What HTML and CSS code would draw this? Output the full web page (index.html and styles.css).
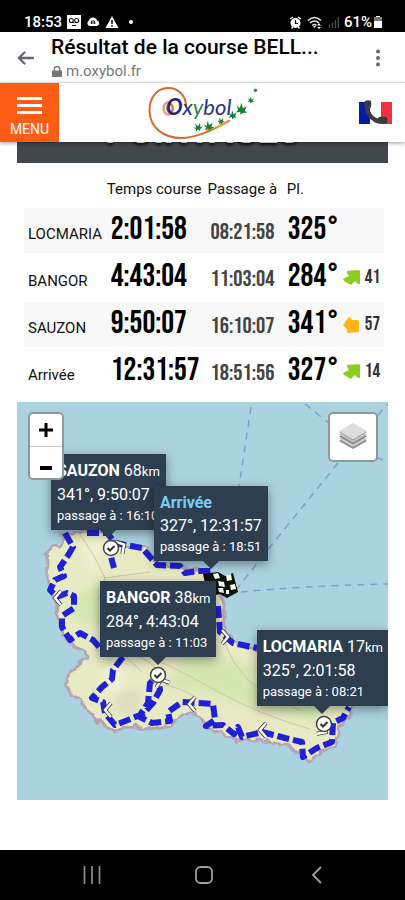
FILE: index.html
```html
<!DOCTYPE html>
<html lang="fr">
<head>
<meta charset="utf-8">
<meta name="viewport" content="width=device-width, initial-scale=1">
<title>Résultat de la course</title>
<link rel="stylesheet" href="styles.css">
</head>
<body>
<div class="status">
  <span>18:53</span>
  <svg width="14" height="14" viewBox="0 0 14 14"><rect width="14" height="14" fill="#fff"/><g fill="none" stroke="#111" stroke-width="1.1"><circle cx="4.300" cy="5.500" r="2"/><circle cx="9.700" cy="5.500" r="2"/><path d="M4.300 7.500h3M5 10.500h4"/></g></svg>
  <svg width="14" height="12" viewBox="0 0 14 12"><path d="M3.500 10A3 3 0 0 1 3 4.500A4.200 4.200 0 0 1 11 4.500A2.800 2.800 0 0 1 11 10z" fill="#fff"/><path d="M5.500 8V5h3v3M4.500 7h5" stroke="#222" fill="none"/></svg>
  <svg width="14" height="12" viewBox="0 0 14 12"><path d="M7 0l6.500 12H.5z" fill="#fff"/><path d="M7 4v4M7 9v1.500" stroke="#000" stroke-width="1.5"/></svg>
  <span class="dot"></span>
  <span class="grow"></span>
  <svg width="13" height="13" viewBox="0 0 13 13"><circle cx="6.500" cy="7" r="5" fill="#fff"/><path d="M1 3l3-2M12 3L9 1M2.500 12.500l1.500-2M10.500 12.500L9 10.500" stroke="#fff" stroke-width="1.400"/><path d="M6.500 4v3.500H9" stroke="#000" stroke-width="1.200" fill="none"/></svg>
  <svg width="16" height="13" viewBox="0 0 16 13"><g fill="none" stroke="#ddd" stroke-width="1.600"><path d="M1 4.500Q7.500-1.500 14 4.500M3 7Q7.500 3 12 7M5.300 9.500Q7.500 7.500 9.500 9.500"/></g><path d="M6 10h3l-1.500 2zM12 7l2 2.500h-4zM12 13l-2-2h4z" fill="#fff"/></svg>
  <svg width="11" height="12" viewBox="0 0 11 12"><path d="M1.500 12V9M4.500 12V6.500M7.500 12V4M10.300 12V1" stroke="#4d4d4d" stroke-width="1.300"/></svg>
  <span class="battery">61%<svg width="8" height="12" viewBox="0 0 8 12"><path d="M2 0h4v1h2v11H0V1h2z" fill="#fff"/><path d="M0 1h8v4H0z" fill="#777"/></svg></span>
</div>
<div class="browser">
  <button class="plain" aria-label="Retour"><svg width="17" height="14" viewBox="0 0 17 14"><path d="M16 7H2M7.500 1.500L1.800 7l5.700 5.500" fill="none" stroke="#646674" stroke-width="2.300" stroke-linecap="round" stroke-linejoin="round"/></svg></button>
  <div class="page-id">
    <div class="page-title">Résultat de la course BELL...</div>
    <div class="page-url"><svg width="10" height="11" viewBox="0 0 10 11"><path d="M0 4.500h10V11H0z" fill="#777"/><path d="M2.300 5V3.200a2.700 2.700 0 0 1 5.400 0V5" fill="none" stroke="#777" stroke-width="1.400"/></svg>m.oxybol.fr</div>
  </div>
  <button class="plain" aria-label="Options"><svg width="6" height="18" viewBox="0 0 6 18" fill="#646674"><circle cx="3" cy="2.500" r="2"/><circle cx="3" cy="9" r="2"/><circle cx="3" cy="15.500" r="2"/></svg></button>
</div>
<header class="site">
  <button class="menu"><span class="bars"><i></i><i></i><i></i></span>MENU</button>
  <a class="logo" href="#">
    <svg width="112" height="56" viewBox="147 84 112 56">
      <g fill="none" stroke="#d9692f" stroke-linecap="round"><path d="M186 105C186 94 177 86 167 87C156 88 149 98 149.500 110C150 126 163 138 184 137C202 135 216 127 229 120" stroke-width="2"/><ellipse cx="168" cy="107.500" rx="4.500" ry="6" stroke-width="2.500" stroke="#e9a083"/><ellipse cx="170" cy="107.500" rx="3" ry="4" stroke-width="1.500"/><path d="M207 129Q220 126 228 120" stroke="#e9a04b" stroke-width="2"/></g>
      <text class="logo-text" x="166" y="114"><tspan class="logo-o">O</tspan>x<tspan fill="#26824a">y</tspan>bol</text>
      <defs><path id="leaf" d="M0 6L-1 3L-5 5L-3.500 2L-6-2L-2.500 0L-2-6L.5-1L4-4L3 1L6 2L2 3.500z"/></defs>
      <g fill="#138236"><use href="#leaf" transform="translate(198 126) rotate(-20) scale(.75)"/><use href="#leaf" transform="translate(209 125) scale(.85)"/><use href="#leaf" transform="translate(221 120) rotate(-10) scale(.6)"/><use href="#leaf" transform="translate(233 114) rotate(10) scale(.75)"/><use href="#leaf" transform="translate(242 108) rotate(15)"/><use href="#leaf" transform="translate(251 99) rotate(15) scale(.55)"/><use href="#leaf" transform="translate(255.500 89) scale(.4)"/></g>
    </svg>
  </a>
  <a class="call" href="#" aria-label="Appeler"><svg width="33" height="25" viewBox="0 0 33 25"><path d="M0 2h11v22H0z" fill="#00209f"/><path d="M11 2h11v22H11z" fill="#fff"/><path d="M22 2h11v22H22z" fill="#f5303e"/><path d="M6 1Q9-.5 12 1Q12.500 4 12 7L10.500 9Q12 16 18.500 18.500L20 17Q24 16 28 17.500Q29 21 28 23.500Q22 25 16 22.500Q6 17 5.500 5z" fill="#3d3d40"/></svg></a>
</header>
<main>
  <h1 class="banner">POINTAGES</h1>
  <table class="splits">
    <thead><tr><th></th><th>Temps course</th><th>Passage à</th><th>Pl.</th><th></th></tr></thead>
    <tbody>
      <tr><td>LOCMARIA</td><td class="time">2:01:58</td><td class="clock">08:21:58</td><td class="place">325°</td><td></td></tr>
      <tr><td>BANGOR</td><td class="time">4:43:04</td><td class="clock">11:03:04</td><td class="place">284°</td><td class="gain"><div><svg class="arrow up" viewBox="0 0 17 16"><path d="M4 1L16 0L17 1V14L15 14L12 11L8 15L1 11L0 9L6 6L4 3z"/></svg>41</div></td></tr>
      <tr><td>SAUZON</td><td class="time">9:50:07</td><td class="clock">16:10:07</td><td class="place">341°</td><td class="gain"><div><svg class="arrow down" viewBox="0 0 17 16"><path d="M5 1L7 0L9 3L15 3L16 5V15L4 16V12L0 8z"/></svg>57</div></td></tr>
      <tr><td>Arrivée</td><td class="time">12:31:57</td><td class="clock">18:51:56</td><td class="place">327°</td><td class="gain"><div><svg class="arrow up" viewBox="0 0 17 16"><path d="M4 1L16 0L17 1V14L15 14L12 11L8 15L1 11L0 9L6 6L4 3z"/></svg>14</div></td></tr>
    </tbody>
  </table>
  <section class="map" aria-label="Carte du parcours">
    <svg class="chart" viewBox="17 402 371 398" preserveAspectRatio="xMidYMid slice">
      <defs>
        <filter id="soft" x="-20%" y="-20%" width="140%" height="140%"><feGaussianBlur stdDeviation="5"/></filter>
        <filter id="edge"><feTurbulence type="fractalNoise" baseFrequency=".12" numOctaves="2" seed="4"/><feDisplacementMap in="SourceGraphic" scale="8" xChannelSelector="R" yChannelSelector="G"/></filter>
        <path id="island" d="M62 535L82 531L104 532L120 544L146 549L160 564L186 568L207 570L219 582L224 607L224 632L238 644L264 652L302 662L352 692L352 714L340 726L335 745L316 755L308 762L300 753L284 745L258 740L238 740L222 734L206 727L196 714L182 714L170 726L150 730L135 726L116 731L104 726L94 716L86 710L80 699L72 694L66 685L70 674L80 664L88 656L84 650L70 645L62 632L57 616L58 604L50 592L47 578L48 563L46 552L54 546L62 545z"/>
        <clipPath id="land"><use href="#island"/></clipPath>
        <g id="check"><circle r="7.500" fill="#fff" stroke="#444" stroke-width="1.500"/><path d="M-3.500 0l2.500 2.500l4.500-4.500" fill="none" stroke="#333" stroke-width="2"/></g>
        <path id="chev" d="M3-6L-3 1L3 8" fill="none"/>
        <g id="chevs"><use href="#chev" x="58" y="597"/><use href="#chev" x="108" y="709"/><use href="#chev" x="192" y="703"/><use href="#chev" x="263" y="729"/><use href="#chev" transform="translate(163 682) rotate(70)"/><use href="#chev" transform="translate(225 638) rotate(180)"/><use href="#chev" transform="translate(122 547) rotate(150)"/><use href="#chev" transform="translate(323 731) rotate(220)"/></g>
      </defs>
      <path d="M17 402h371v398H17z" fill="#aad3df"/>
      <g fill="none" stroke="#7f9fd0" stroke-width="1.500" stroke-dasharray="7 6"><path d="M251 407L239 487M305 404L330 424M338 463L270 547L236 590M378 415L388 404M376 457L388 462M241 592Q300 586 388 584"/></g>
      <g filter="url(#edge)"><use href="#island" fill="#e8eac4" stroke="#b5a5b2" stroke-width="3"/></g>
      <g clip-path="url(#land)">
        <g filter="url(#soft)"><path d="M185 655Q250 655 325 705L315 722L245 705Q205 690 165 685zM70 600L105 580L110 630L75 620z" fill="#d4e6b0"/><path d="M85 545L105 538L90 575zM100 675L125 660L120 700zM245 680L278 665L284 680z" fill="#f3f1d8"/><path d="M120 690L142 690L138 712L112 710z" fill="#e0dcc0"/></g>
        <g fill="none" stroke="#c9c8ad"><path d="M80 535Q92 550 105 578L98 600M104 578L150 572M95 650Q145 650 158 672M145 655Q170 665 215 690T310 729M122 653L142 672M224 640Q240 690 300 710M165 685Q195 690 222 720"/></g>
      </g>
      <path class="route" d="M65 533L73 547L67 557L60 567L64 576L55 580L50 590L57 597L67 593L74 596L74 608L62 616L62 627L70 640L80 633L93 640L100 648"/>
      <path class="route" d="M123 657L113 670L112 679L102 687L92 698L103 702L105 713L115 725L128 720L140 715L148 703L150 683L158 675L160 690L153 703L140 717L152 723L170 721L168 712L182 702L213 704L215 720L206 726L223 725L234 734L238 727L242 737L262 732L285 738L302 742L303 757L317 748L332 742L333 723L343 718L349 707"/>
      <path class="route" d="M87 533L107 533L115 543L142 548L157 565L180 566L185 573L198 571L212 571M218 606L220 632L233 643L257 648M115 543L110 553L114 568"/>
      <use href="#chevs" stroke="#333" stroke-width="4"/>
      <use href="#chevs" stroke="#fff" stroke-width="2.500"/>
      <use href="#check" x="111" y="548"/><use href="#check" x="158" y="675"/><use href="#check" x="324" y="724"/>
      <g><path d="M203 574L218 572L225 576L233 573L238 592L227 598L220 594L208 597z" fill="#0b120c"/><path d="M213 574l5-1l2 5l-5 1zM226 575l5-1l1 6l-5 1zM218 581l6 1l1 5l-6-1zM230 585l5-1l1 5l-5 1zM218 588l5 0l1 5l-5-1zM226 590l3 0l0 4l-3 0z" fill="#f4fff0"/></g>
    </svg>
    <div class="tip sauzon"><b>SAUZON</b> 68<small>km</small><p>341°, 9:50:07</p><p class="pass">passage à : 16:10</p></div>
    <div class="tip arrivee"><b>Arrivée</b><p>327°, 12:31:57</p><p class="pass">passage à : 18:51</p></div>
    <div class="tip bangor"><b>BANGOR</b> 38<small>km</small><p>284°, 4:43:04</p><p class="pass">passage à : 11:03</p></div>
    <div class="tip locmaria"><b>LOCMARIA</b> 17<small>km</small><p>325°, 2:01:58</p><p class="pass">passage à : 08:21</p></div>
    <div class="zoom"><button aria-label="Zoom avant"><svg width="16" height="16" viewBox="0 0 16 16"><path d="M8 1v14M1 8h14" stroke="#000" stroke-width="3"/></svg></button><button aria-label="Zoom arrière"><svg width="16" height="16" viewBox="0 0 16 16"><path d="M2 13h12" stroke="#000" stroke-width="4"/></svg></button></div>
    <button class="layers" aria-label="Couches"><svg width="30" height="30" viewBox="0 0 30 30"><path d="M1 19l14 8l14-8l-3-2H4z" fill="#8b8b8b"/><path d="M1 17l14 8l14-8l-3-2H4z" fill="#ccc"/><path d="M1 14.500l14 8l14-8l-3-2H4z" fill="#888"/><path d="M1 12.500l14 8l14-8l-3-2H4z" fill="#c4c4c4"/><path d="M1 10l14 8.500L29 10L15 2z" fill="#999"/><path d="M1 9l14 8.500L29 9L15 1z" fill="#dedede"/></svg></button>
  </section>
</main>
<nav class="system">
  <button class="plain" aria-label="Applications récentes"><svg width="18" height="18" viewBox="0 0 18 18"><path d="M1.500 0v18M9 0v18M16.500 0v18" stroke="#8e8e8e" stroke-width="1.700"/></svg></button>
  <button class="plain" aria-label="Accueil"><svg width="18" height="18" viewBox="0 0 18 18"><rect x="1" y="1" width="16" height="16" rx="4.500" fill="none" stroke="#a0a0a0" stroke-width="1.800"/></svg></button>
  <button class="plain" aria-label="Retour système"><svg width="18" height="18" viewBox="0 0 18 18"><path d="M13 1L5 9l8 8" fill="none" stroke="#a0a0a0" stroke-width="1.800"/></svg></button>
</nav>
</body>
</html>
```
FILE: styles.css
```css
* { box-sizing: border-box; }
body {
  margin: 0;
  min-height: 100vh;
  display: flex;
  flex-direction: column;
  background: #fff;
  color: #111;
  font-family: Roboto, "Liberation Sans", sans-serif;
  font-size: 15px;
}
svg { display: block; flex: none; }
p { margin: 0; }
button { font-family: inherit; border: 0; cursor: pointer; }
.plain { background: none; padding: 0; display: flex; align-items: center; justify-content: center; }
.status {
  height: 32px;
  padding: 12px 23px 0 24px;
  display: flex;
  align-items: center;
  gap: 5px;
  background: #000;
  color: #fff;
  font-size: 15px;
  font-weight: 500;
  line-height: 20px;
}
.dot { width: 4px; height: 4px; margin-left: 5px; border-radius: 50%; background: #fff; }
.grow { flex: 1; }
.battery { display: flex; align-items: center; gap: 2px; }
.browser {
  height: 51px;
  padding: 2px 24px 0 17px;
  display: flex;
  align-items: center;
  gap: 17px;
  border-bottom: 1px solid #f0f0f2;
}
.page-id { flex: 1; min-width: 0; }
.page-title { color: #000; font-size: 21px; font-weight: 500; line-height: 26px; white-space: nowrap; }
.page-url { display: flex; align-items: center; gap: 4px; color: #777; font-size: 15px; line-height: 22px; padding-left: 1px; }
.site {
  position: relative;
  z-index: 2;
  height: 59px;
  padding-right: 13px;
  display: flex;
  align-items: center;
  background: #fff;
  box-shadow: 0 1px 4px rgba(0, 0, 0, .4);
}
.menu {
  width: 59px;
  height: 59px;
  padding: 14px 0 0;
  display: flex;
  flex-direction: column;
  align-items: center;
  gap: 7px;
  background: #fb5c16;
  color: #fff;
  font-size: 14px;
  line-height: 16px;
}
.logo { flex: 1; display: flex; justify-content: center; padding-right: 12px; }
.bars { display: grid; gap: 4px; width: 25px; }
.bars i { height: 3px; background: #fff; }
.logo-text { font-family: Lato, "DejaVu Sans", sans-serif; font-style: italic; font-size: 22px; fill: #27338c; }
.logo-o { font-weight: 700; fill: #30246e; }
main { padding: 0 17px; }
.banner {
  margin: 0;
  height: 21px;
  overflow: hidden;
  display: flex;
  align-items: flex-end;
  justify-content: center;
  padding-bottom: 12px;
  background: #42474d;
  color: #f4f4f6;
  font-size: 36px;
  font-weight: 700;
  line-height: 40px;
  text-shadow: 0 2px 3px #111;
}
.splits {
  width: calc(100% - 11px);
  margin: 7px 4px 0 7px;
  border-collapse: separate;
  border-spacing: 0 2px;
  table-layout: fixed;
}
.splits th { height: 34px; padding: 0; text-align: left; font-weight: 400; white-space: nowrap; vertical-align: middle; }
.splits th:first-child { width: 23%; }
.splits th:nth-child(2) { width: 28%; }
.splits th:nth-child(3) { width: 22%; }
.splits th:nth-child(4) { width: 15%; }
.splits td { height: 45px; padding: 0; vertical-align: baseline; white-space: nowrap; }
.splits td:first-child { padding-left: 4px; }
.splits tbody tr:nth-child(odd) { background: #f8f8f8; }
.splits .time, .clock, .place, .gain { font-family: "Bebas Neue", "Roboto Condensed", "Liberation Sans Narrow", "Liberation Sans", sans-serif; }
.splits .time { padding-left: 4px; color: #000; font-size: 32px; line-height: 44px; }
.splits .clock { padding-left: 3px; color: #444; font-size: 23px; }
.splits .place { padding-left: 1px; color: #000; font-size: 32px; line-height: 44px; }
.splits .gain { vertical-align: middle; color: #333; font-size: 19px; }
.gain div { display: flex; align-items: center; justify-content: flex-end; gap: 5px; padding-right: 4px; }
.arrow { width: 17px; height: 16px; }
.up { fill: #8ccb20; }
.down { fill: #fdb515; }
.map { position: relative; margin-top: 6px; aspect-ratio: 371 / 398; overflow: hidden; }
.chart { width: 100%; height: 100%; }
.route { fill: none; stroke: #2020d8; stroke-width: 6; stroke-dasharray: 12 4; stroke-linejoin: round; }
.tip {
  position: absolute;
  padding: 5px 6px;
  background: #2d3e50;
  color: #fff;
  font-size: 16px;
  line-height: 24px;
  white-space: nowrap;
  box-shadow: 0 3px 10px rgba(0, 0, 0, .4);
}
.tip p { line-height: 22px; }
.tip .pass { font-size: 13px; line-height: 19px; }
.tip small { font-size: 13px; }
.tip::after {
  content: "";
  position: absolute;
  top: 100%;
  left: calc(50% - 8px);
  border: 8px solid transparent;
  border-top-color: #2d3e50;
  border-bottom: 0;
}
.sauzon { left: 34px; top: 52px; }
.arrivee { left: 137px; top: 84px; }
.arrivee b { color: #78cdf5; }
.bangor { left: 83px; top: 179px; }
.locmaria { right: 0; top: 228px; padding-right: 5px; }
.zoom { position: absolute; left: 11px; top: 10px; border: 2px solid #8e999f; border-radius: 5px; overflow: hidden; }
.zoom button { width: 32px; height: 32px; padding: 0; display: grid; place-items: center; background: #fff; }
.zoom button + button { border-top: 1px solid #ccc; }
.layers { position: absolute; right: 10px; top: 10px; width: 50px; height: 50px; padding: 0; display: grid; place-items: center; background: #fff; border: 2px solid #8e999f; border-radius: 5px; }
.system {
  height: 50px;
  margin-top: auto;
  padding: 0 32px 0 36px;
  display: flex;
  align-items: center;
  justify-content: space-around;
  background: #000;
}
.system button { width: 40px; height: 40px; }
```
